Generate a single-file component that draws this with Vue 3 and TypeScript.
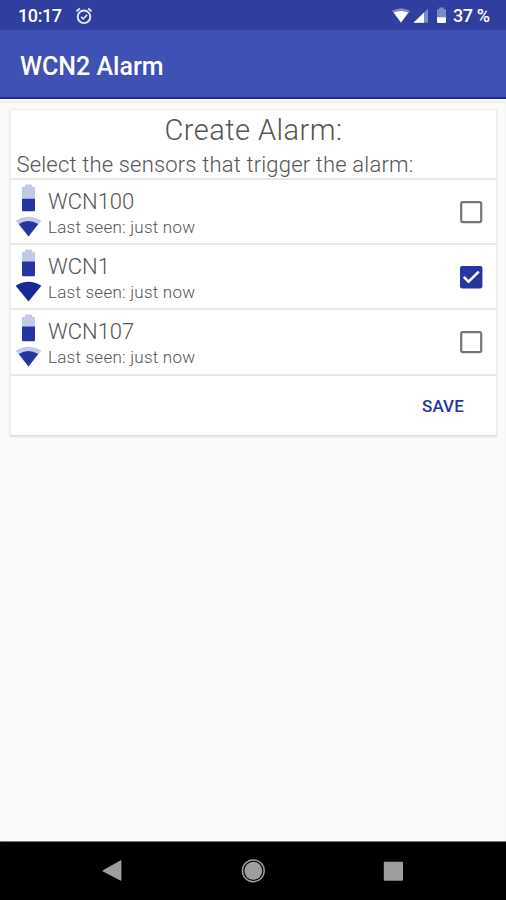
<script setup lang="ts">
import { ref } from 'vue'

interface Sensor {
  name: string
  lastSeen: string
  chargeTop: number
  fullSignal: boolean
  selected: boolean
}

const sensors = ref<Sensor[]>([
  { name: 'WCN100', lastSeen: 'just now', chargeTop: 14.8, fullSignal: false, selected: false },
  { name: 'WCN1', lastSeen: 'just now', chargeTop: 12.6, fullSignal: true, selected: true },
  { name: 'WCN107', lastSeen: 'just now', chargeTop: 12.6, fullSignal: false, selected: false },
])
</script>

<template>
  <div class="screen">
    <header class="status">
      <span class="clock">10:17</span>
      <svg class="alarm" width="18" height="18" viewBox="0 0 18 18" fill="none" stroke="#e4e7f8">
        <circle cx="9" cy="9.8" r="6.3" stroke-width="1.9" />
        <path d="M1.4 4.4 4.8 1.5M16.6 4.4 13.2 1.5" stroke-width="1.8" />
        <path d="m6 9.8 2.2 2.1 4-4" stroke-width="1.5" />
      </svg>
      <svg class="tray" width="56" height="18" viewBox="0 0 56 18" fill="#fff">
        <path d="M0 4.1Q9 -1.6 18 4.1L9 15.7Z" fill="#7e89cc" />
        <path d="M1.7 5.6Q9 2.4 16.3 5.6L9 15.4Z" />
        <path d="M21.5 15.7 36 1.7V15.7Z" fill="#7e89cc" />
        <path d="M21.5 15.7 32 5.5V15.7Z" />
        <path d="M45 2.2H47.3V.4H51.7V2.2H54V10.5H45Z" fill="#7e89cc" />
        <path d="M45 10.3H54V14.7Q54 16 52.7 16H46.3Q45 16 45 14.7Z" />
      </svg>
      <span class="percent">37 %</span>
    </header>
    <div class="appbar"><h1>WCN2 Alarm</h1></div>

    <main>
      <section class="card">
        <div class="intro">
          <h2>Create Alarm:</h2>
          <p>Select the sensors that trigger the alarm:</p>
        </div>
        <label v-for="sensor in sensors" :key="sensor.name" class="row">
          <svg class="state" width="28" height="56" viewBox="0 0 28 56">
            <path d="M7 4.3Q7 2.7 8.3 2.7H10V1.4Q10 .4 11 .4H16Q17 .4 17 1.4V2.7H18.7Q20 2.7 20 4.3V26H7Z" fill="#c5c9e8" />
            <path :d="`M7 ${sensor.chargeTop}H20V26Q20 27.2 18.8 27.2H8.2Q7 27.2 7 26Z`" fill="#2636a0" />
            <path d="M.6 36.7Q13.5 28.7 26.4 36.7L13.5 52.5Z" :fill="sensor.fullSignal ? '#182898' : '#c5c9e8'" />
            <path v-if="!sensor.fullSignal" d="M3.8 40Q13.5 34.2 23.2 40L13.5 52.5Z" fill="#2636a0" />
          </svg>
          <span class="labels">
            <span class="name">{{ sensor.name }}</span>
            <span class="seen">Last seen: {{ sensor.lastSeen }}</span>
          </span>
          <input v-model="sensor.selected" type="checkbox" />
          <svg class="box" width="24" height="24" viewBox="0 0 24 24">
            <template v-if="sensor.selected">
              <rect x="1" y="1" width="22.4" height="22.4" rx="2.2" fill="#2636a0" />
              <path d="m4.8 11.9 4.7 4.8L19.8 6.6" fill="none" stroke="#fff" stroke-width="2.5" />
            </template>
            <rect v-else x="2.2" y="2.2" width="20" height="20" rx="1.6" fill="none" stroke="#757575" stroke-width="2.2" />
          </svg>
        </label>
        <div class="actions"><button type="button">SAVE</button></div>
      </section>
    </main>

    <nav>
      <svg width="506" height="58" viewBox="0 0 506 58" fill="#9e9e9e">
        <path d="M103 28.2 120.3 18.5Q121.4 18 121.4 19.2V38Q121.4 39.2 120.3 38.6L103 29.6Q102 28.9 103 28.2Z" />
        <circle cx="253.3" cy="28.8" r="9" />
        <circle cx="253.3" cy="28.8" r="10.9" fill="none" stroke="#9e9e9e" stroke-width="1.5" />
        <rect x="383.8" y="19.8" width="19.2" height="19" rx="1" />
      </svg>
    </nav>
  </div>
</template>

<style>
body { margin: 0; }
</style>

<style scoped>
.screen {
  width: 506px;
  height: 900px;
  display: flex;
  flex-direction: column;
  overflow: hidden;
  background: #fafafa;
  font-family: Roboto, "Liberation Sans", sans-serif;
}
.status {
  height: 30px;
  flex: none;
  display: flex;
  align-items: center;
  box-sizing: border-box;
  padding: 2px 16px 0 18px;
  background: #303f9f;
  color: #fff;
  font-size: 18px;
  font-weight: 500;
  line-height: 28px;
}
.clock { width: 57px; white-space: nowrap; letter-spacing: -.4px; }
.tray { margin-left: auto; }
.percent { width: 37px; margin-left: 5px; white-space: nowrap; letter-spacing: -.4px; }
.appbar {
  height: 69px;
  flex: none;
  box-sizing: border-box;
  border-bottom: 2px solid #1827a0;
  padding: 0 20px;
  background: #3f51b5;
}
h1 { margin: 0; color: #fff; font-size: 25px; font-weight: 500; line-height: 73px; }
main {
  flex: 1;
  box-sizing: border-box;
  padding: 9px 9px 0 10px;
  border-top: 2px solid #fff;
  box-shadow: inset 0 2px 2px #f1efef;
}
.card {
  height: 325px;
  margin-top: -1px;
  background: #fff;
  border: 1px solid #eee;
  border-bottom-color: #ddd;
  box-shadow: 0 1px 2px #ddd;
  color: #555;
}
.intro { height: 68px; padding: 0 5.5px; }
h2 { margin: 0; padding-top: 1px; font-size: 29px; font-weight: 300; line-height: 38px; letter-spacing: .45px; text-align: center; white-space: nowrap; }
p { margin: 0; font-size: 22px; font-weight: 300; line-height: 31px; letter-spacing: .17px; white-space: nowrap; }
.row {
  height: 65.2px;
  box-sizing: border-box;
  border-top: 2px solid #e7e7e7;
  padding: 1px 13px 0 4px;
  display: flex;
  align-items: center;
}
.state { margin-top: -1px; }
.labels { display: flex; flex-direction: column; margin-left: 5px; flex: 1; white-space: nowrap; }
.name { margin-top: 2px; font-size: 22px; font-weight: 300; line-height: 30px; }
.seen { margin-top: -1px; font-size: 17px; font-weight: 300; line-height: 23px; letter-spacing: .24px; }
input { position: absolute; opacity: 0; }
.box { margin-top: -1px; }
.actions {
  height: 60px;
  box-sizing: border-box;
  margin-top: .8px;
  border-top: 2px solid #e7e7e7;
  padding: 2px 32px 0 0;
  display: flex;
  justify-content: flex-end;
  align-items: center;
}
button { border: 0; padding: 0; background: none; color: #2636a0; font: 500 17px Roboto, sans-serif; letter-spacing: .15px; }
nav { height: 58px; flex: none; background: #000; border-top: 1px solid #777; }
nav svg { display: block; }
</style>
